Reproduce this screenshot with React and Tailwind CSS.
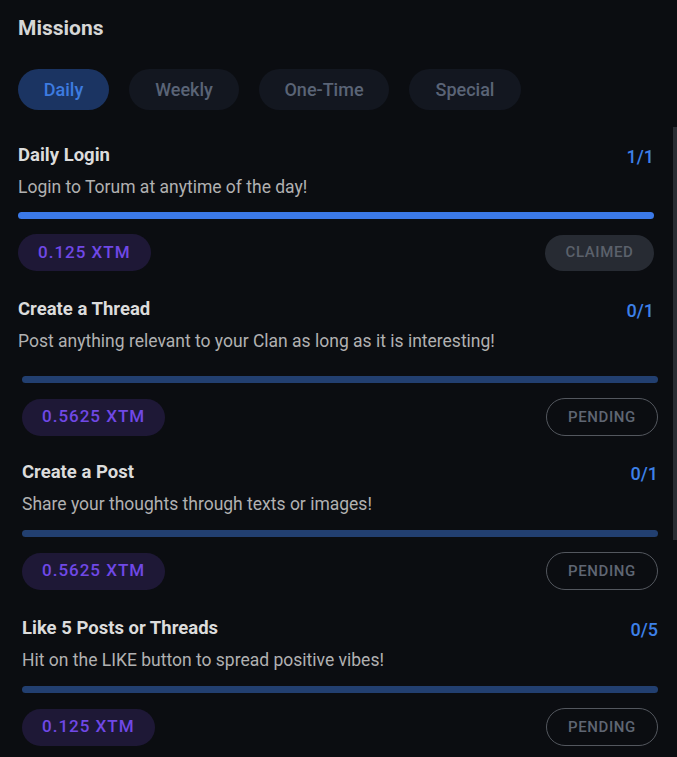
import React from "react";

const tabs = [
  { label: "Daily", w: "w-[91px]", active: true },
  { label: "Weekly", w: "w-[110px]" },
  { label: "One-Time", w: "w-[130px]" },
  { label: "Special", w: "w-[112px]" },
];

const missions = [
  {
    title: "Daily Login",
    desc: "Login to Torum at anytime of the day!",
    count: "1/1",
    reward: "0.125 XTM",
    done: true,
    wrap: "ml-[18px] mt-[34px]",
    barGap: "mt-[13px]",
  },
  {
    title: "Create a Thread",
    desc: "Post anything relevant to your Clan as long as it is interesting!",
    count: "0/1",
    reward: "0.5625 XTM",
    wrap: "ml-[18px] mt-[27px]",
    barGap: "mt-[23px]",
    shift: true,
  },
  {
    title: "Create a Post",
    desc: "Share your thoughts through texts or images!",
    count: "0/1",
    reward: "0.5625 XTM",
    wrap: "ml-[22px] mt-[25px]",
    barGap: "mt-[14px]",
  },
  {
    title: "Like 5 Posts or Threads",
    desc: "Hit on the LIKE button to spread positive vibes!",
    count: "0/5",
    reward: "0.125 XTM",
    wrap: "ml-[22px] mt-[27px]",
    barGap: "mt-[14px]",
  },
];

function Mission({ m }) {
  return (
    <div className={`${m.wrap} w-[636px]`}>
      <div className="flex h-6 items-center justify-between">
        <span className="text-[18.5px] font-bold text-[#dcdcdc]">{m.title}</span>
        <span className="text-[18px] font-medium text-[#3d80e8]">{m.count}</span>
      </div>
      <div className="mt-[7px] h-6 leading-6 text-[17.5px] text-[#b1b1b1]">{m.desc}</div>
      <div className={`${m.barGap} ${m.shift ? "ml-1 -mr-1" : ""}`}>
        <div
          className={`h-[7px] rounded-full ${m.done ? "bg-[#3b79e8]" : "bg-[#223f70]"}`}
        />
        <div className="mt-[15px] flex items-center justify-between">
          <div className="flex h-[37px] items-center rounded-full bg-[#1e1836] px-5 text-[17px] font-medium tracking-[1px] text-[#7048e6]">
            {m.reward}
          </div>
          {m.done ? (
            <div className="flex h-[36px] w-[109px] items-center justify-center rounded-full bg-[#272b33] text-[15px] font-medium tracking-[0.6px] text-[#5b616b]">
              CLAIMED
            </div>
          ) : (
            <div className="flex h-[38px] w-[112px] items-center justify-center rounded-full border border-[#53575e] text-[15px] font-medium tracking-[0.6px] text-[#5f6673]">
              PENDING
            </div>
          )}
        </div>
      </div>
    </div>
  );
}

export default function App() {
  return (
    <div
      className="relative h-[757px] w-[677px] overflow-hidden bg-[#0b0d11]"
      style={{ fontFamily: "Roboto, 'Liberation Sans', sans-serif" }}
    >
      <div className="ml-[18px] mt-[14px] h-7 leading-7 text-[21px] font-bold text-[#d6d6d6]">
        Missions
      </div>
      <div className="ml-[18px] mt-[27px] flex gap-5">
        {tabs.map((t) => (
          <div
            key={t.label}
            className={`flex h-[41px] ${t.w} items-center justify-center rounded-full text-[18px] font-medium ${
              t.active ? "bg-[#1b3462] text-[#3d7be0]" : "bg-[#131720] text-[#5a6476]"
            }`}
          >
            {t.label}
          </div>
        ))}
      </div>
      {missions.map((m) => (
        <Mission key={m.title} m={m} />
      ))}
      <div className="absolute right-0 top-[127px] h-[413px] w-[4px] bg-[#2a2d33]" />
    </div>
  );
}
